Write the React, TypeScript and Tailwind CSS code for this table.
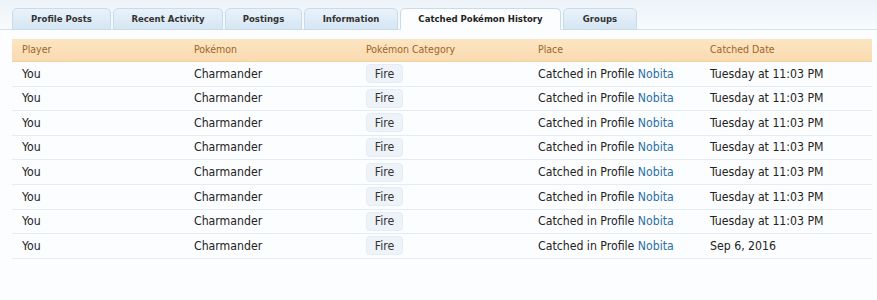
const tabs = [
  { label: 'Profile Posts', w: 'w-[99px]' },
  { label: 'Recent Activity', w: 'w-[110px]' },
  { label: 'Postings', w: 'w-[77px]' },
  { label: 'Information', w: 'w-[94px]' },
  { label: 'Catched Pokémon History', w: 'w-[161px]', active: true },
  { label: 'Groups', w: 'w-[74px]' },
];

const rows = [
  'Tuesday at 11:03 PM',
  'Tuesday at 11:03 PM',
  'Tuesday at 11:03 PM',
  'Tuesday at 11:03 PM',
  'Tuesday at 11:03 PM',
  'Tuesday at 11:03 PM',
  'Tuesday at 11:03 PM',
  'Sep 6, 2016',
];

export default function App() {
  return (
    <div className="w-[877px] h-[300px] bg-[#fcfdfe] text-[#222] [font-family:'DejaVu_Sans_Condensed','DejaVu_Sans',sans-serif]">
      {/* Tab strip */}
      <div className="h-[30px] bg-gradient-to-b from-[#edf3f8] to-[#f8fbfd] border-b border-[#d4e2ee] flex items-end gap-[2px] px-[12px]">
        {tabs.map((t) => (
          <div
            key={t.label}
            className={`${t.w} h-[22px] -mb-px flex items-center justify-center rounded-t-[5px] border border-[#c9dbea] text-[9.5px] font-bold ${
              t.active
                ? 'bg-[#fcfdfe] border-b-[#fcfdfe] text-[#222]'
                : 'bg-gradient-to-b from-[#e9f2fa] to-[#d6e6f4] text-[#333]'
            }`}
          >
            {t.label}
          </div>
        ))}
      </div>

      {/* Table */}
      <div className="mx-[12px] mt-[9px] w-[860px]">
        <div className="h-[23px] grid grid-cols-5 items-center bg-gradient-to-b from-[#fde5c3] to-[#f9dab0] text-[10.5px] text-[#9c6627] border-b border-[#f2d2a2]">
          <div className="pl-[10px]">Player</div>
          <div className="pl-[10px]">Pokémon</div>
          <div className="pl-[10px]">Pokémon Category</div>
          <div className="pl-[10px]">Place</div>
          <div className="pl-[10px]">Catched Date</div>
        </div>
        {rows.map((date, i) => (
          <div
            key={i}
            className="h-[24.6px] grid grid-cols-5 items-center text-[12.2px] border-b border-[#e3ecf4]"
          >
            <div className="pl-[10px]">You</div>
            <div className="pl-[10px]">Charmander</div>
            <div className="pl-[10px]">
              <span className="inline-flex items-center justify-center w-[37px] h-[19px] rounded-[4px] bg-[#edf3f9] border border-[#e4edf5] text-[#333]">
                Fire
              </span>
            </div>
            <div className="pl-[10px]">
              Catched in Profile <span className="text-[#2a6ea6]">Nobita</span>
            </div>
            <div className="pl-[10px]">{date}</div>
          </div>
        ))}
      </div>
    </div>
  );
}
